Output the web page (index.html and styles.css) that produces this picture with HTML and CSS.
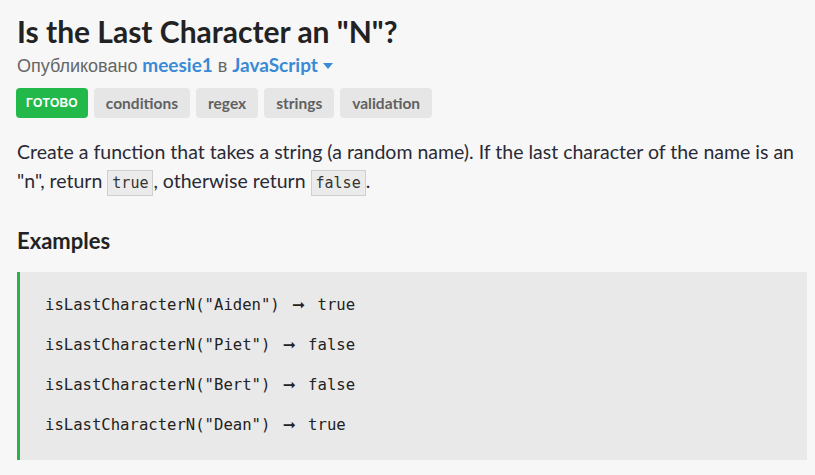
FILE: index.html
```html
<!DOCTYPE html>
<html lang="ru">
<head>
<meta charset="utf-8">
<title>Is the Last Character an "N"?</title>
<link rel="stylesheet" href="styles.css">
</head>
<body>
<main class="page">
  <h1 class="title">Is the Last Character an "N"?</h1>
  <div class="byline">
    <span class="cyr">Опубликовано</span>
    <a class="link">meesie1</a>
    <span class="cyr">в</span>
    <a class="link">JavaScript<svg class="caret" width="10" height="6" viewBox="0 0 10 6"><path d="M0 0h10L5 6z" fill="currentColor"/></svg></a>
  </div>
  <div class="tags">
    <span class="tag tag-done">ГОТОВО</span>
    <span class="tag">conditions</span>
    <span class="tag">regex</span>
    <span class="tag">strings</span>
    <span class="tag">validation</span>
  </div>
  <p class="desc">Create a function that takes a string (a random name). If the last character of the name is an "n", return <code class="inline">true</code>, otherwise return <code class="inline">false</code>.</p>
  <h2 class="subhead">Examples</h2>
  <pre class="examples"><code>isLastCharacterN("Aiden") <span class="arrow">➞</span> true

isLastCharacterN("Piet") <span class="arrow">➞</span> false

isLastCharacterN("Bert") <span class="arrow">➞</span> false

isLastCharacterN("Dean") <span class="arrow">➞</span> true</code></pre>
</main>
</body>
</html>
```
FILE: styles.css
```css
html, body {
  margin: 0;
  padding: 0;
  background: #f7f7f7;
}

.page {
  padding: 0 8px 0 17px;
  font-family: Lato, "Liberation Sans", sans-serif;
  color: #2a2a36;
}

.title {
  margin: 13px 0 0;
  font-size: 30px;
  line-height: 36px;
  font-weight: 700;
  color: #222;
}

.byline {
  margin-top: 4px;
  font-size: 19px;
  line-height: 24px;
  color: #666;
}

.cyr {
  font-family: "Liberation Sans", Arial, sans-serif;
  font-size: 18px;
}

.link {
  color: #3a8ad6;
  font-weight: 700;
}

.caret {
  margin-left: 5px;
  vertical-align: 3px;
}

.tags {
  margin: 10px 0 0 -1px;
  display: flex;
  gap: 6px;
}

.tag {
  height: 30px;
  box-sizing: border-box;
  padding: 0 12px;
  display: flex;
  align-items: center;
  border-radius: 4px;
  background: #e6e6e6;
  color: #616161;
  font-size: 15.5px;
  font-weight: 700;
}

.tag-done {
  background: #23b94a;
  color: #fff;
  font-family: "Liberation Sans", Arial, sans-serif;
  font-size: 12px;
  letter-spacing: 0.3px;
  padding: 0 10px;
}

.desc {
  margin: 19px 0 0;
  font-size: 19.5px;
  line-height: 29px;
}

.inline {
  font-family: "DejaVu Sans Mono", monospace;
  font-size: 15px;
  padding: 3px 4px;
  background: #ebebeb;
  border: 1px solid #cfcfcf;
  color: #333;
}

.subhead {
  margin: 30px 0 0;
  font-size: 22px;
  line-height: 26px;
  font-weight: 700;
  color: #222;
}

.examples {
  margin: 18px 0 0;
  padding: 23px 25px 25px;
  background: #e9e9e9;
  border-left: 3px solid #2db24a;
  font-family: "DejaVu Sans Mono", monospace;
  font-size: 15.6px;
  line-height: 20px;
  color: #222;
}

.arrow {
  font-family: "DejaVu Sans", sans-serif;
  font-weight: 700;
  display: inline-block;
  width: 19px;
  text-align: center;
}
```
